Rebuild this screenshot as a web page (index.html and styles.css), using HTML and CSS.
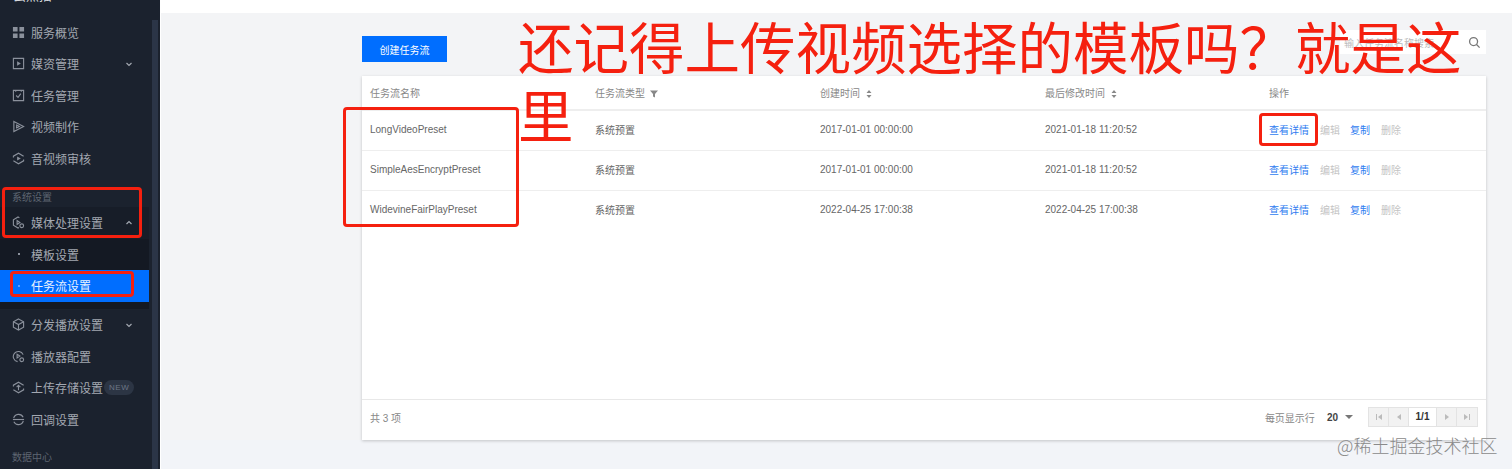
FILE: index.html
```html
<!doctype html>
<html lang="zh">
  <head>
    <meta charset="UTF-8" />
    <title>任务流设置</title>
    <link rel="stylesheet" href="styles.css">
  </head>
  <body>
    <aside class="sidebar">
      <nav class="nav">
        <div class="brand"><span>云点播</span></div>

        <a class="item">
          <svg class="icon" viewBox="0 0 14 14"><path class="solid" d="M1 1h5v5H1zM8 1h5v5H8zM1 8h5v5H1zM8 8h5v5H8z"/></svg>
          服务概览
        </a>
        <a class="item">
          <svg class="icon" viewBox="0 0 14 14"><path d="M1.500 1.500h11v11h-11z"/><path class="solid" d="M5.500 4.500 9.500 7l-4 2.500z"/></svg>
          媒资管理
          <svg class="chevron" viewBox="0 0 8 8"><path d="M1.500 3 4 5.500 6.500 3"/></svg>
        </a>
        <a class="item">
          <svg class="icon" viewBox="0 0 14 14"><path d="M1.500 1.500h11v11h-11z"/><path d="M4.500 7 6.500 9 9.500 5M4 1v2M10 1v2"/></svg>
          任务管理
        </a>
        <a class="item">
          <svg class="icon" viewBox="0 0 14 14"><path d="M2 1.500 12.500 7 2 12.500z"/><path d="M5 5.500 8 7 5 8.500z"/></svg>
          视频制作
        </a>
        <a class="item">
          <svg class="icon" viewBox="0 0 14 14"><path d="M12.500 4.500 7 1.300 1.500 4.500v1.300M1.500 9.500 7 12.700l5.500-3.200V8.200"/><path class="solid" d="M5.500 4.800 9.500 7l-4 2.200z"/></svg>
          音视频审核
        </a>

        <div class="group">系统设置</div>
        <a class="item open">
          <svg class="icon" viewBox="0 0 14 14"><path d="M8 2 6.500 1 1.500 4v6l5 3 1-.6"/><path d="M5.500 5v4l3-2z"/><circle cx="10.500" cy="10.500" r="2"/></svg>
          媒体处理设置
          <svg class="chevron" viewBox="0 0 8 8"><path d="M1.500 5 4 2.500 6.500 5"/></svg>
        </a>
        <div class="sub">
          <a class="sub-item"><i class="dot"></i>模板设置</a>
          <a class="sub-item active"><i class="dot"></i>任务流设置</a>
        </div>

        <a class="item">
          <svg class="icon" viewBox="0 0 14 14"><path d="M7 1 12.500 4v6L7 13 1.500 10V4z"/><path d="M1.500 4 7 7l5.500-3M7 7v6"/></svg>
          分发播放设置
          <svg class="chevron" viewBox="0 0 8 8"><path d="M1.500 3 4 5.500 6.500 3"/></svg>
        </a>
        <a class="item">
          <svg class="icon" viewBox="0 0 14 14"><path d="M12 5A5.500 5.500 0 1 0 6 12.500"/><path d="M5.500 4.500v4l3-2z"/><circle cx="10.500" cy="10.500" r="2"/></svg>
          播放器配置
        </a>
        <a class="item">
          <svg class="icon" viewBox="0 0 14 14"><path d="M12.500 4.500 7 1.300 1.500 4.500v1.300M1.500 9.500 7 12.700l5.500-3.200V8.200"/><path d="M7 10V5M5 6.500l2-2 2 2"/></svg>
          上传存储设置
          <span class="new">NEW</span>
        </a>
        <a class="item">
          <svg class="icon" viewBox="0 0 14 14"><path d="M1.800 5.500A5.500 5.500 0 0 1 12 4.500M12.200 8.500A5.500 5.500 0 0 1 2 9.500"/><path d="M1 7h12"/></svg>
          回调设置
        </a>

        <div class="group last">数据中心</div>
      </nav>
      <div class="scrollbar"></div>
    </aside>

    <main class="main">
      <div class="topbar"></div>
      <div class="content">
        <div class="toolbar">
          <button class="btn-primary">创建任务流</button>
          <div class="search">
            <span class="placeholder">输入任务流名称搜索</span>
            <svg class="search-icon" viewBox="0 0 14 14"><circle cx="6" cy="6" r="4.300"/><path d="m9.200 9.200 3.300 3.300"/></svg>
          </div>
        </div>

        <section class="card">
          <table class="flows">
            <thead>
              <tr>
                <th>任务流名称</th>
                <th>任务流类型 <svg class="th-icon" viewBox="0 0 8 8"><path d="M0 .5h8L5 4v3.500L3 6.500V4z"/></svg></th>
                <th>创建时间 <svg class="th-icon" viewBox="0 0 8 8"><path d="M4 0 6.500 3h-5zM4 8 1.500 5h5z"/></svg></th>
                <th>最后修改时间 <svg class="th-icon" viewBox="0 0 8 8"><path d="M4 0 6.500 3h-5zM4 8 1.500 5h5z"/></svg></th>
                <th>操作</th>
              </tr>
            </thead>
            <tbody>
              <tr>
                <td>LongVideoPreset</td>
                <td>系统预置</td>
                <td>2017-01-01 00:00:00</td>
                <td>2021-01-18 11:20:52</td>
                <td class="actions"><a>查看详情</a><span>编辑</span><a>复制</a><span>删除</span></td>
              </tr>
              <tr>
                <td>SimpleAesEncryptPreset</td>
                <td>系统预置</td>
                <td>2017-01-01 00:00:00</td>
                <td>2021-01-18 11:20:52</td>
                <td class="actions"><a>查看详情</a><span>编辑</span><a>复制</a><span>删除</span></td>
              </tr>
              <tr>
                <td>WidevineFairPlayPreset</td>
                <td>系统预置</td>
                <td>2022-04-25 17:00:38</td>
                <td>2022-04-25 17:00:38</td>
                <td class="actions"><a>查看详情</a><span>编辑</span><a>复制</a><span>删除</span></td>
              </tr>
            </tbody>
          </table>

          <footer class="pager-row">
            <span class="total">共 3 项</span>
            <span class="per-page">每页显示行</span>
            <span class="page-size">20</span>
            <i class="caret"></i>
            <div class="pager">
              <span class="page-btn"><svg viewBox="0 0 8 8"><path d="M1 1h1v6H1zM7 1v6L3 4z"/></svg></span>
              <span class="page-btn"><svg viewBox="0 0 8 8"><path d="M6 1v6L2 4z"/></svg></span>
              <span class="page-num">1/1</span>
              <span class="page-btn"><svg viewBox="0 0 8 8"><path d="M2 1v6l4-3z"/></svg></span>
              <span class="page-btn"><svg viewBox="0 0 8 8"><path d="M1 1v6l4-3zM6 1h1v6H6z"/></svg></span>
            </div>
          </footer>
        </section>
      </div>
    </main>

    <!-- annotations drawn over the screenshot -->
    <div class="mark mark-media"></div>
    <div class="mark mark-flow"></div>
    <div class="mark mark-names"></div>
    <div class="mark mark-detail"></div>
    <div class="note">还记得上传视频选择的模板吗？就是这里</div>
    <div class="watermark">@稀土掘金技术社区</div>
  </body>
</html>
```

FILE: styles.css
```css
* {
  box-sizing: border-box;
}
html,
body {
  height: 469px;
  margin: 0;
  overflow: hidden;
}
body {
  position: relative;
  display: flex;
  font-family: "Liberation Sans", "Noto Sans CJK SC", sans-serif;
  font-size: 10px;
  color: #666;
  background-color: #f2f4f8;
}

/* sidebar */
.sidebar {
  display: flex;
  flex: none;
  width: 161px;
  height: 469px;
  background-color: #1b222e;
  border-right: 1px solid #fff;
}
.nav {
  flex: none;
  width: 149px;
  margin-right: 3px;
}
.scrollbar {
  width: 6px;
  margin-top: 20px;
  background-color: #2b3547;
}
.brand {
  display: flex;
  align-items: flex-end;
  height: 16.5px;
  padding: 0 0 15px 13px;
  overflow: hidden;
  font-size: 13px;
  line-height: 13px;
  color: #d5d8dd;
}
.item,
.sub-item {
  display: flex;
  align-items: center;
  height: 31.5px;
  font-size: 12px;
  color: #a3a8b1;
}
.item {
  padding-left: 12px;
}
.item.open {
  background-color: #171d28;
}
.icon {
  flex: none;
  width: 13px;
  height: 13px;
  margin-right: 6px;
  fill: none;
  stroke: #8b919c;
  stroke-width: 1.2;
}
.icon .solid {
  fill: #8b919c;
  stroke: none;
}
.chevron {
  flex: none;
  width: 8px;
  height: 8px;
  margin-right: 16px;
  margin-left: auto;
  fill: none;
  stroke: #a3a8b1;
  stroke-width: 1.2;
}
.group {
  height: 17px;
  margin-top: 14.5px;
  padding-left: 12px;
  font-size: 10px;
  line-height: 17px;
  color: #5e6571;
}
.group + .item {
  margin-top: 1.5px;
}
.group.last {
  margin-top: 14px;
}
.sub {
  height: 70.5px;
  background-color: #141923;
}
.sub-item {
  padding-left: 18px;
}
.sub-item.active {
  color: #e6f0ff;
  background-color: #006eff;
}
.dot {
  flex: none;
  width: 2px;
  height: 2px;
  margin-right: 11px;
  background-color: #8b919c;
}
.active .dot {
  background-color: #5a9cff;
}
.new {
  height: 15px;
  margin-left: 1px;
  padding: 0 5px;
  font-size: 8px;
  line-height: 15px;
  letter-spacing: 0.5px;
  color: #6c7686;
  background-color: #2c3544;
  border-radius: 8px;
}

/* main area */
.main {
  display: flex;
  flex: 1;
  flex-direction: column;
  min-width: 0;
}
.topbar {
  flex: none;
  height: 13px;
  background-color: #fff;
}
.content {
  padding: 0 26px 0 201px;
  background-color: #f3f4f6;
}
.toolbar {
  display: flex;
  justify-content: space-between;
  height: 63px;
}
.btn-primary {
  width: 85px;
  height: 26px;
  margin-top: 23px;
  padding: 0;
  font-family: inherit;
  font-size: 10px;
  color: #fff;
  background-color: #006eff;
  border: none;
}
.search {
  display: flex;
  align-items: center;
  justify-content: space-between;
  width: 146px;
  height: 24px;
  margin-top: 17px;
  padding: 0 5px 0 4px;
  color: #bbb;
  background-color: #fff;
}
.search-icon {
  width: 13px;
  height: 13px;
  fill: none;
  stroke: #777;
  stroke-width: 1.4;
}
.card {
  display: flex;
  flex-direction: column;
  height: 364px;
  background-color: #fff;
  box-shadow: 0 1px 3px rgba(0, 0, 0, 0.2);
}
.flows {
  width: 100%;
  border-collapse: collapse;
  table-layout: fixed;
}
.flows th,
.flows td {
  width: 225px;
  padding: 0 0 0 8px;
  font-weight: normal;
  text-align: left;
  border-bottom: 1px solid #eee;
}
.flows th:nth-child(4) {
  width: 224px;
}
.flows th:last-child,
.flows td:last-child {
  width: auto;
}
.flows th {
  height: 34px;
  padding-bottom: 1px;
  color: #888;
  border-bottom-width: 2px;
}
.flows td {
  height: 40px;
  padding-bottom: 2px;
}
.flows tbody tr:last-child td {
  border-bottom: none;
}
.th-icon {
  width: 8px;
  height: 8px;
  margin-left: 2px;
  vertical-align: -1px;
  fill: #888;
}
.actions a {
  margin-right: 11px;
  color: #2f7cf0;
}
.actions span {
  margin-right: 10px;
  color: #c4c4c4;
}

/* footer and pager */
.pager-row {
  display: flex;
  align-items: center;
  height: 41px;
  margin-top: auto;
  padding: 0 8px 6px;
  border-top: 1px solid #e8e8e8;
}
.total {
  margin-right: auto;
  color: #888;
}
.per-page {
  color: #888;
}
.page-size {
  margin-left: 12px;
  font-size: 10px;
  font-weight: bold;
  color: #444;
}
.caret {
  width: 0;
  height: 0;
  margin: 0 15px 0 7px;
  border-top: 4px solid #777;
  border-right: 4px solid transparent;
  border-left: 4px solid transparent;
}
.pager {
  display: flex;
  height: 20px;
  border: 1px solid #e3e3e3;
}
.page-btn {
  display: flex;
  align-items: center;
  justify-content: center;
  width: 20px;
  background-color: #f2f2f2;
  border-right: 1px solid #e3e3e3;
}
.page-btn:last-child {
  border-right: none;
}
.page-btn svg {
  width: 8px;
  height: 8px;
  fill: #bbb;
}
.page-num {
  width: 28px;
  font-weight: bold;
  line-height: 18px;
  text-align: center;
  color: #333;
  background-color: #fff;
  border-right: 1px solid #e3e3e3;
}

/* red annotations over the page */
.mark {
  position: absolute;
  border: 3px solid #f5200f;
  border-radius: 4px;
}
.mark-media {
  top: 187px;
  left: 2px;
  width: 140px;
  height: 51px;
}
.mark-flow {
  top: 271px;
  left: 10px;
  width: 124px;
  height: 26px;
}
.mark-names {
  top: 107px;
  left: 343px;
  width: 176px;
  height: 120px;
}
.mark-detail {
  top: 113px;
  left: 1259px;
  width: 59px;
  height: 33px;
}
.note {
  position: absolute;
  top: 11px;
  left: 518px;
  width: 950px;
  font-family: "Noto Sans CJK SC", sans-serif;
  font-size: 55.5px;
  line-height: 68px;
  color: #f5200f;
}
.watermark {
  position: absolute;
  top: 433px;
  left: 1337px;
  font-family: "Noto Sans CJK SC", sans-serif;
  font-size: 18px;
  font-weight: 300;
  line-height: 24px;
  color: #8a8a8a;
}
```
